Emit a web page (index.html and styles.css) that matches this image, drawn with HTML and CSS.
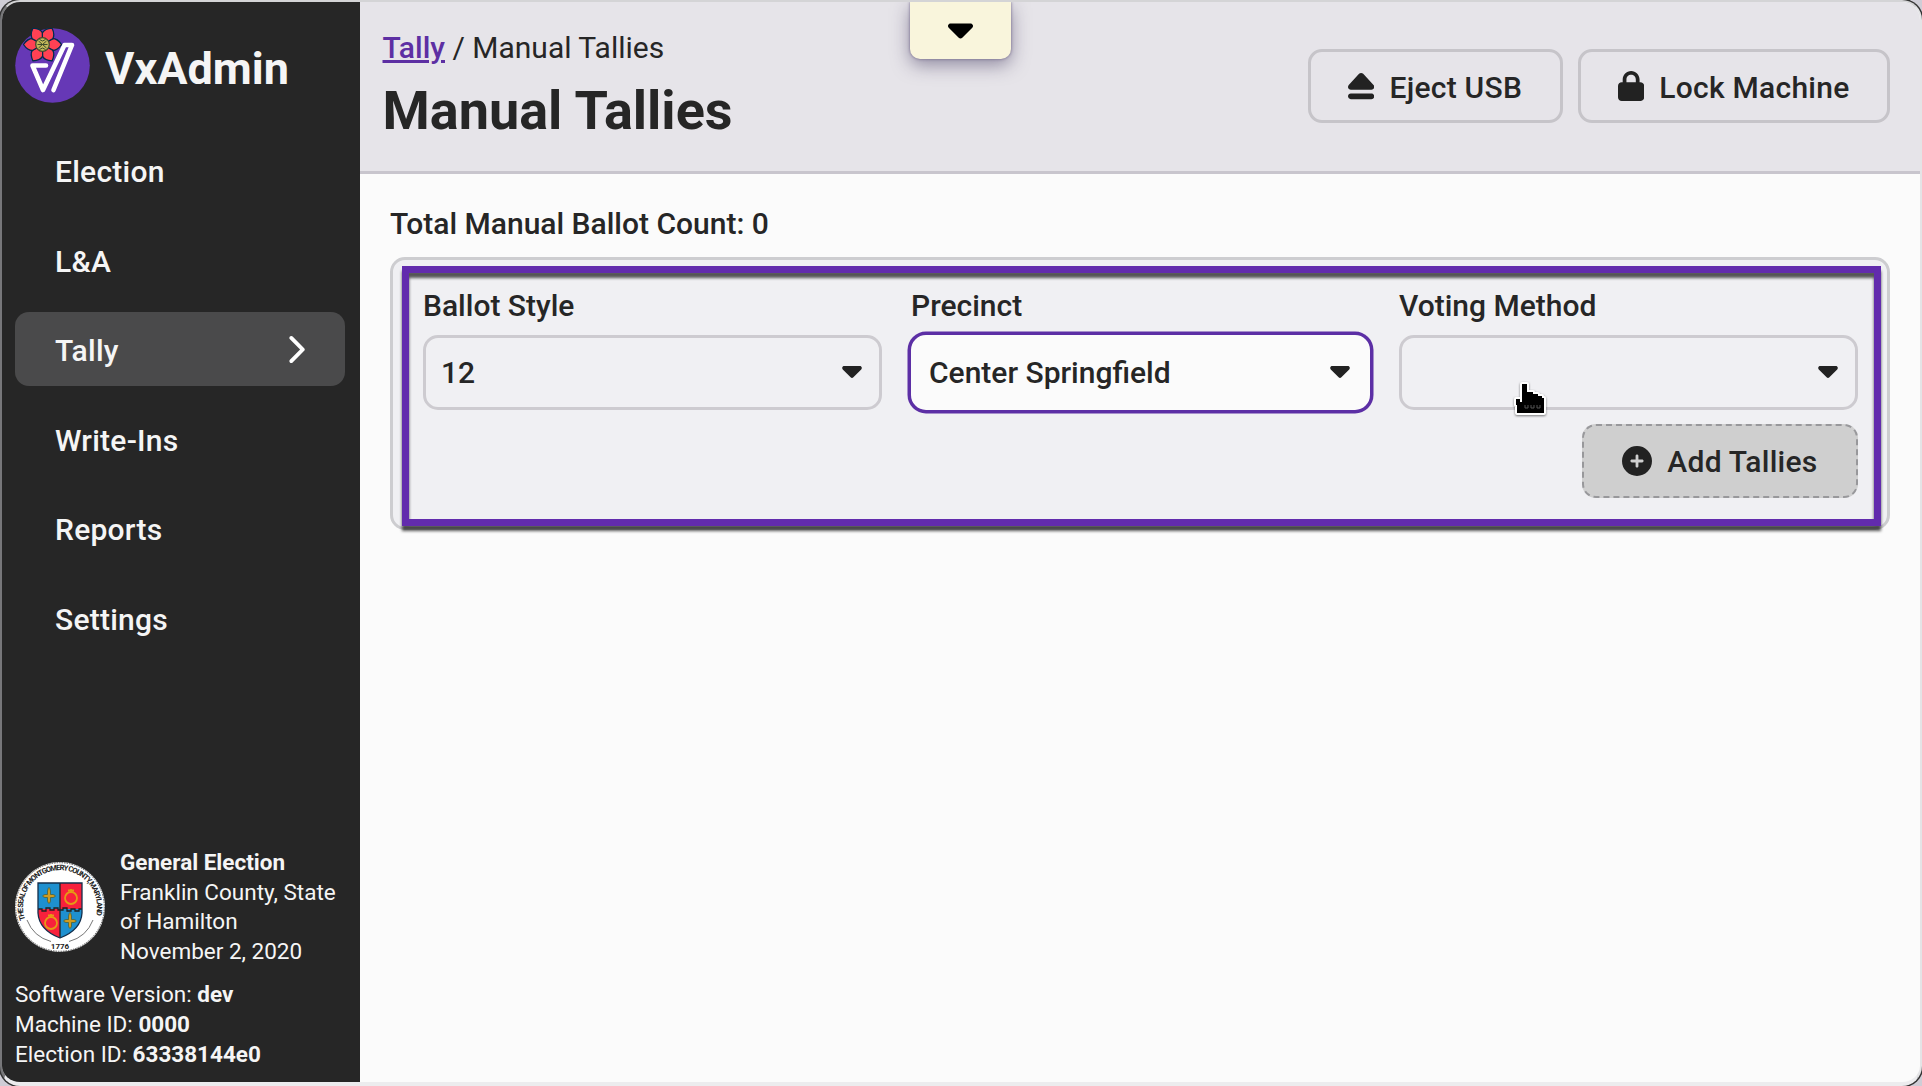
FILE: index.html
```html
<!DOCTYPE html>
<html lang="en">
<head>
<meta charset="utf-8">
<title>VxAdmin</title>
<link rel="stylesheet" href="styles.css">
</head>
<body>
<svg class="defs" width="0" height="0" aria-hidden="true">
  <symbol id="caret" viewBox="0 190 320 196"><path d="M137.4 374.6c12.5 12.5 32.8 12.5 45.3 0l128-128c9.2-9.2 11.9-22.9 6.9-34.9s-16.6-19.8-29.6-19.8L32 192c-12.9 0-24.6 7.8-29.6 19.8s-2.2 25.7 6.9 34.9l128 128z"/></symbol>
</svg>
<div class="window">
  <aside class="sidebar">
    <div class="brand">
      <svg class="logo" viewBox="0 0 75 75">
        <circle cx="37.5" cy="37.5" r="37.3" fill="#6638b6"/>
        <path d="M31 37.500H17.500L28 62L49.500 17H57L38.500 62" fill="none" stroke="#fff" stroke-width="4.600" stroke-linejoin="round" stroke-linecap="round"/>
        <g transform="translate(27.500 16.500)">
          <g fill="#ff4154" stroke="#002c4b" stroke-width="1.300" stroke-linejoin="round">
            <path id="petal" d="M5-3L10-6Q15-6 19 0Q15 6 10 6L5 3Z"/>
            <use href="#petal" transform="rotate(60)"/><use href="#petal" transform="rotate(120)"/><use href="#petal" transform="rotate(180)"/><use href="#petal" transform="rotate(240)"/><use href="#petal" transform="rotate(300)"/>
          </g>
          <circle r="6.800" fill="#c2b85a" stroke="#3f4b2c" stroke-width="1.200"/>
          <path d="M-4-3.500L4 3.500M-4 3.500L4-3.500M-5 0H5M-3-5Q0-2 3-5M-3 5Q0 2 3 5" fill="none" stroke="#3f4b2c" stroke-width="1"/>
        </g>
      </svg>
      <span class="brand-name">VxAdmin</span>
    </div>
    <nav class="nav">
      <a class="nav-item">Election</a>
      <a class="nav-item">L&amp;A</a>
      <a class="nav-item active">Tally
        <svg class="chevron" viewBox="62 32 258 448"><path d="M310.600 233.400c12.500 12.500 12.500 32.800 0 45.300l-192 192c-12.500 12.500-32.800 12.500-45.300 0s-12.500-32.800 0-45.300L242.700 256 73.400 86.600c-12.500-12.500-12.500-32.800 0-45.300s32.800-12.500 45.300 0l192 192z"/></svg>
      </a>
      <a class="nav-item">Write-Ins</a>
      <a class="nav-item">Reports</a>
      <a class="nav-item">Settings</a>
    </nav>
    <footer class="info">
      <div class="election">
        <svg class="seal" viewBox="0 0 90 90">
          <defs>
            <path id="ring" d="M10.200 57.700A37 37 0 1 1 79.800 57.700"/>
            <clipPath id="shield"><path d="M23 21H67V51Q66 68 45 76Q24 68 23 51Z"/></clipPath>
          </defs>
          <circle cx="45" cy="45" r="45" fill="#fff"/>
          <circle cx="45" cy="45" r="44.300" fill="none" stroke="#333" stroke-width=".8" stroke-dasharray="1.500 1"/>
          <path d="M12 58A35.500 35.500 0 0 0 36 79.500M54 79.500A35.500 35.500 0 0 0 78 58" fill="none" stroke="#777" stroke-width="1"/>
          <text class="seal-text" textLength="137"><textPath href="#ring" textLength="137">THE SEAL OF MONTGOMERY COUNTY, MARYLAND</textPath></text>
          <text class="seal-year" x="45" y="86.500">1776</text>
          <g clip-path="url(#shield)">
            <path fill="#1e90cf" d="M23 21H45V47H23zM45 47H67V77H45z"/>
            <path fill="#f8213c" d="M45 21H67V47H45zM23 47H45V77H23z"/>
          </g>
          <path d="M23 47H27V49H31V46H35V48H39V46H43V48H48V46H52V49H56V47H60V49H64V47H67M45 21V76" fill="none" stroke="#222" stroke-width="1.300"/>
          <path d="M23 21H67V51Q66 68 45 76Q24 68 23 51Z" fill="none" stroke="#132f4c" stroke-width="1.300"/>
          <g fill="none" stroke="#e59a15" stroke-width="1.800"><circle cx="56" cy="36" r="6"/><circle cx="36" cy="61" r="6"/><path d="M53 28.500H59M56 27V30M33 53.500H39M36 52V55"/></g>
          <g fill="#cf9c20" stroke="#35502d" stroke-width=".6">
            <path id="cross" d="M32.500 32.500V29Q34 22 35.500 29V32.500H38Q43 34 38 35.500H35.500V39Q34 44 32.500 39V35.500H30Q25 34 30 32.500Z"/>
            <use href="#cross" x="21" y="25"/>
          </g>
        </svg>
        <div class="election-text"><b>General Election</b><br>Franklin County, State of Hamilton<br>November 2, 2020</div>
      </div>
      <div class="versions">Software Version: <b>dev</b><br>Machine ID: <b>0000</b><br>Election ID: <b>63338144e0</b></div>
    </footer>
  </aside>
  <div class="main">
    <header class="header">
      <div class="titles">
        <div class="crumbs"><a class="crumb-link">Tally</a> / Manual Tallies</div>
        <h1 class="title">Manual Tallies</h1>
      </div>
      <div class="actions">
        <button class="button"><svg class="icon" viewBox="0 0 448 512"><path d="M224 32c13.500 0 26.300 5.600 35.400 15.600l176 192c12.800 14 16.200 34.300 8.500 51.700S419 320 400 320H48c-19 0-36.300-11.300-43.900-28.700s-4.200-37.700 8.500-51.700l176-192C197.700 37.600 210.500 32 224 32zM0 432c0-26.500 21.500-48 48-48H400c26.500 0 48 21.500 48 48s-21.500 48-48 48H48c-26.500 0-48-21.500-48-48z"/></svg><span>Eject USB</span></button>
        <button class="button"><svg class="icon" viewBox="0 0 448 512"><path d="M144 144v48H304V144c0-44.200-35.800-80-80-80s-80 35.800-80 80zM80 192V144C80 64.500 144.500 0 224 0s144 64.500 144 144v48h16c35.300 0 64 28.700 64 64V448c0 35.300-28.700 64-64 64H64c-35.300 0-64-28.700-64-64V256c0-35.300 28.700-64 64-64H80z"/></svg><span>Lock Machine</span></button>
      </div>
    </header>
    <main class="content">
      <div class="count">Total Manual Ballot Count: 0</div>
      <section class="card">
        <div class="fields">
          <div class="field"><label class="label">Ballot Style</label><div class="select"><span>12</span><svg class="caret"><use href="#caret"/></svg></div></div>
          <div class="field"><label class="label">Precinct</label><div class="select focused"><span>Center Springfield</span><svg class="caret"><use href="#caret"/></svg></div></div>
          <div class="field"><label class="label">Voting Method</label><div class="select"><span></span><svg class="caret"><use href="#caret"/></svg></div></div>
        </div>
        <button class="button add"><svg class="icon" viewBox="0 0 512 512"><path d="M256 512A256 256 0 1 0 256 0a256 256 0 1 0 0 512zM232 344V280H168c-13.300 0-24-10.700-24-24s10.700-24 24-24h64V168c0-13.300 10.700-24 24-24s24 10.700 24 24v64h64c13.300 0 24 10.700 24 24s-10.700 24-24 24H280v64c0 13.300-10.700 24-24 24s-24-10.700-24-24z"/></svg><span>Add Tallies</span></button>
        <div class="highlight"></div>
      </section>
    </main>
  </div>
  <div class="dev-tab"><svg class="dev-caret"><use href="#caret"/></svg></div>
  <svg class="cursor" viewBox="0 0 50 50">
    <path d="M17 8H22V16H28V18H33V20H37V22H39V37H12V29H11V23H15V26H17Z" fill="#000" stroke="#fff" stroke-width="4" stroke-linejoin="round" paint-order="stroke"/>
    <path d="M20 29v3h3v-3M26 29v3h3v-3M32 29v3h3v-3" fill="none" stroke="#555" stroke-width="1"/>
  </svg>
</div>
</body>
</html>
```
FILE: styles.css
```css
* { box-sizing: border-box; }
body {
  margin: 0;
  height: 1086px;
  overflow: hidden;
  background: #cfcdd6;
  color: #262626;
  font-family: Roboto, "Liberation Sans", sans-serif;
  font-size: 30px;
  line-height: 36px;
}
.defs { position: absolute; }
.window {
  position: relative;
  display: flex;
  width: 1922px;
  height: 1086px;
  border: 2px solid #8a8a8c;
  border-width: 2px 2px 4px;
  border-color: #d4d4d6 #e4e4e6 #ececee #77777a;
  border-radius: 20px;
  overflow: hidden;
  background: #fbfbfb;
  box-shadow: 0 0 0 1.500px #333;
}
.sidebar {
  display: flex;
  flex-direction: column;
  width: 358px;
  padding: 26px 15px 0 13px;
  background: #262626;
  color: #f5f5f5;
}
.brand { display: flex; align-items: center; gap: 15px; height: 75px; }
.logo { width: 75px; height: 75px; }
.brand-name { padding-top: 5px; font-size: 45px; font-weight: 700; line-height: 75px; }
.nav { display: flex; flex-direction: column; gap: 15.500px; margin-top: 30px; }
.nav-item {
  display: flex;
  align-items: center;
  justify-content: space-between;
  height: 74px;
  padding: 4px 40px 0 40px;
  border-radius: 14px;
  font-weight: 500;
  letter-spacing: .25px;
}
.nav-item.active { background: #4a4a4b; }
.chevron { width: 16px; height: 27px; margin-top: -3px; fill: #fff; }
.info { margin-top: auto; padding-bottom: 13px; font-size: 22.500px; line-height: 29.500px; }
.election { display: flex; align-items: center; gap: 15px; margin-bottom: 13px; }
.seal { flex: none; width: 90px; height: 90px; }
.election-text { margin-right: -4px; }
.versions { line-height: 30px; }
.seal-text { font-size: 7.500px; font-weight: 700; fill: #222; }
.seal-year { font-size: 8px; font-weight: 700; fill: #222; text-anchor: middle; }
.main { flex: 1; min-width: 0; }
.header {
  display: flex;
  justify-content: space-between;
  height: 172px;
  padding: 0 30px 0 22.500px;
  background: #e6e4e9;
  border-bottom: 3px solid #c8c5cd;
}
.titles { padding-top: 28px; }
.crumb-link { color: #5d2fa3; font-weight: 500; text-decoration: underline; }
.title { margin: 12px 0 0; font-size: 54px; line-height: 66px; }
.actions { display: flex; gap: 15px; padding-top: 47px; }
.button {
  display: flex;
  align-items: center;
  gap: 15px;
  height: 74px;
  padding: 0 37.500px;
  border: 3px solid #c6c4c9;
  border-radius: 14px;
  background: none;
  color: inherit;
  font: inherit;
  font-weight: 500;
  letter-spacing: .25px;
  white-space: nowrap;
}
.button span { padding-top: 3px; }
.icon { height: 30px; fill: #222; }
.content { padding: 32px 30px 0; }
.count { font-weight: 500; }
.card {
  position: relative;
  display: flex;
  flex-direction: column;
  gap: 14px;
  height: 273px;
  margin-top: 15px;
  padding: 28px 29.500px 0 30px;
  border: 3px solid #cdcdd0;
  border-radius: 15px;
  background: #f0f0f3;
}
.fields { display: grid; grid-template-columns: repeat(3, 1fr); gap: 29.500px; }
.label { display: block; margin-bottom: 11px; font-weight: 500; }
.select {
  display: flex;
  align-items: center;
  justify-content: space-between;
  height: 74.500px;
  padding: 0 17px 0 15px;
  border: 3px solid #cdcbd0;
  border-radius: 15px;
  font-weight: 500;
}
.select span { padding-top: 2px; }
.select.focused { border-color: #fbfbfb; background: #fbfbfb; box-shadow: 0 0 0 3.500px #5c2fa5; }
.caret { width: 20px; height: 12px; fill: #222; }
.add { align-self: flex-end; padding: 0 38px; border: 2px dashed #98989b; background: #cfcfcf; }
.highlight {
  position: absolute;
  left: 8.500px;
  top: 6px;
  width: 1479.500px;
  height: 260px;
  border: 7.500px solid #622bad;
  filter: drop-shadow(0 5px 1.500px rgba(0, 0, 0, .65));
}
.dev-tab {
  position: absolute;
  left: 908px;
  top: 0;
  display: flex;
  justify-content: center;
  width: 101px;
  height: 57px;
  padding-top: 21px;
  border-radius: 0 0 10px 10px;
  background: #f9f5dc;
  box-shadow: 0 0 3px #6f6488, 0 6px 18px rgba(60, 50, 90, .5);
}
.dev-caret { width: 25px; height: 16px; }
.cursor {
  position: absolute;
  left: 1503px;
  top: 374px;
  width: 50px;
  height: 50px;
  filter: drop-shadow(0 1px 1px rgba(0, 0, 0, .5));
}
```
